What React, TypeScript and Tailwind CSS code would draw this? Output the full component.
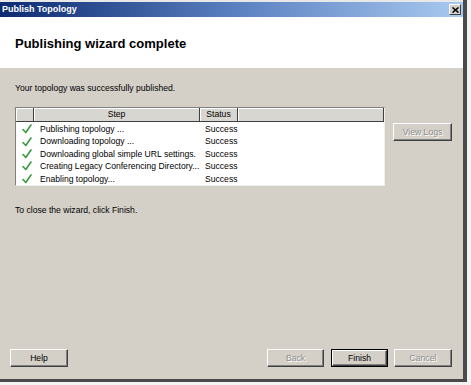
import React from "react";

const font = { fontFamily: '"Liberation Sans", Arial, sans-serif' };

function Check() {
  return (
    <svg width="10" height="10" viewBox="0 0 10 10" className="block">
      <path d="M1 5.5 L3.8 8.5 L9 1" fill="none" stroke="#3a9a3a" strokeWidth="1.6" strokeLinecap="round" strokeLinejoin="round" />
    </svg>
  );
}

function Btn({ label, w, disabled, def }: { label: string; w: string; disabled?: boolean; def?: boolean }) {
  return (
    <div
      className={`${w} h-[18px] flex items-center justify-center text-[8.6px] bg-[#d4d0c8] ${
        def ? "border border-black" : ""
      }`}
    >
      <div className="w-full h-full flex items-center justify-center border-t border-l border-t-white border-l-white border-r border-b border-r-[#404040] border-b-[#404040] shadow-[inset_-1px_-1px_0_#808080]">
        <span className={disabled ? "text-[#8e8e8e] [text-shadow:1px_1px_0_#fff]" : "text-black"}>{label}</span>
      </div>
    </div>
  );
}

const rows = [
  "Publishing topology ...",
  "Downloading topology ...",
  "Downloading global simple URL settings.",
  "Creating Legacy Conferencing Directory...",
  "Enabling topology...",
];

export default function App() {
  return (
    <div className="w-[471px] h-[385px] bg-[#f4f4f4] overflow-hidden" style={font}>
      <div className="w-[467px] h-[382px] border-r-[4px] border-b-[3px] border-r-[#4a4a4a] border-b-[#4a4a4a] flex flex-col bg-[#d4d0c8]">
        <div className="h-[2px] bg-[#e8e8e8]" />
        {/* title bar */}
        <div className="h-[15px] flex items-center justify-between pl-[2px] pr-[2px] bg-gradient-to-r from-[#0d2a70] via-[#5a7fc0] to-[#a9caf0]">
          <span className="text-white font-bold text-[9px] leading-none">Publish Topology</span>
          <div className="w-[12px] h-[11px] bg-[#d4d0c8] border-t border-l border-t-white border-l-white border-r border-b border-r-[#404040] border-b-[#404040] flex items-center justify-center">
            <svg width="7" height="6" viewBox="0 0 7 6">
              <path d="M0.5 0.5 L6.5 5.5 M6.5 0.5 L0.5 5.5" stroke="#000" strokeWidth="1.6" />
            </svg>
          </div>
        </div>
        {/* header */}
        <div className="h-[51px] bg-white flex items-center pl-[15px] pt-[2px]">
          <span className="text-[13px] font-bold text-black leading-none">Publishing wizard complete</span>
        </div>
        {/* body */}
        <div className="flex-1 flex flex-col">
          <div className="mt-[14px] ml-[15px] h-[13px] text-[8.6px] leading-[13px] text-black">
            Your topology was successfully published.
          </div>
          <div className="mt-[12px] flex items-start">
            <div className="ml-[15px] w-[370px] h-[79px] bg-white border-t border-l border-t-[#808080] border-l-[#808080] border-r border-b border-r-[#f0f0f0] border-b-[#f0f0f0] flex flex-col">
              <div className="h-[16px] flex bg-[#d8d6d0] text-[8.6px] text-black">
                <div className="w-[18px] border-r border-b border-r-[#404040] border-b-[#404040] shadow-[inset_1px_1px_0_#fff]" />
                <div className="w-[166px] border-r border-b border-r-[#404040] border-b-[#404040] shadow-[inset_1px_1px_0_#fff] flex items-center justify-center">Step</div>
                <div className="w-[38px] border-r border-b border-r-[#404040] border-b-[#404040] shadow-[inset_1px_1px_0_#fff] flex items-center justify-center">Status</div>
                <div className="flex-1 border-r border-b border-r-[#404040] border-b-[#404040] shadow-[inset_1px_1px_0_#fff]" />
              </div>
              <div className="pt-[1px] flex flex-col">
                {rows.map((r) => (
                  <div key={r} className="h-[12.4px] flex items-center text-[8.6px] leading-none text-black">
                    <div className="w-[24px] pl-[6px] flex items-center">
                      <Check />
                    </div>
                    <div className="w-[165px] whitespace-nowrap">{r}</div>
                    <div>Success</div>
                  </div>
                ))}
              </div>
            </div>
            <div className="ml-[8px] mt-[16px]">
              <Btn label="View Logs" w="w-[59px]" disabled />
            </div>
          </div>
          <div className="mt-[18px] ml-[15px] h-[13px] text-[8.6px] leading-[13px] text-black">
            To close the wizard, click Finish.
          </div>
          <div className="mt-auto mb-[12px] flex items-center pl-[10px] pr-[11px]">
            <Btn label="Help" w="w-[58px]" />
            <div className="flex-1" />
            <Btn label="Back" w="w-[57px]" disabled />
            <div className="w-[7px]" />
            <Btn label="Finish" w="w-[57px]" def />
            <div className="w-[6px]" />
            <Btn label="Cancel" w="w-[58px]" disabled />
          </div>
        </div>
      </div>
    </div>
  );
}
